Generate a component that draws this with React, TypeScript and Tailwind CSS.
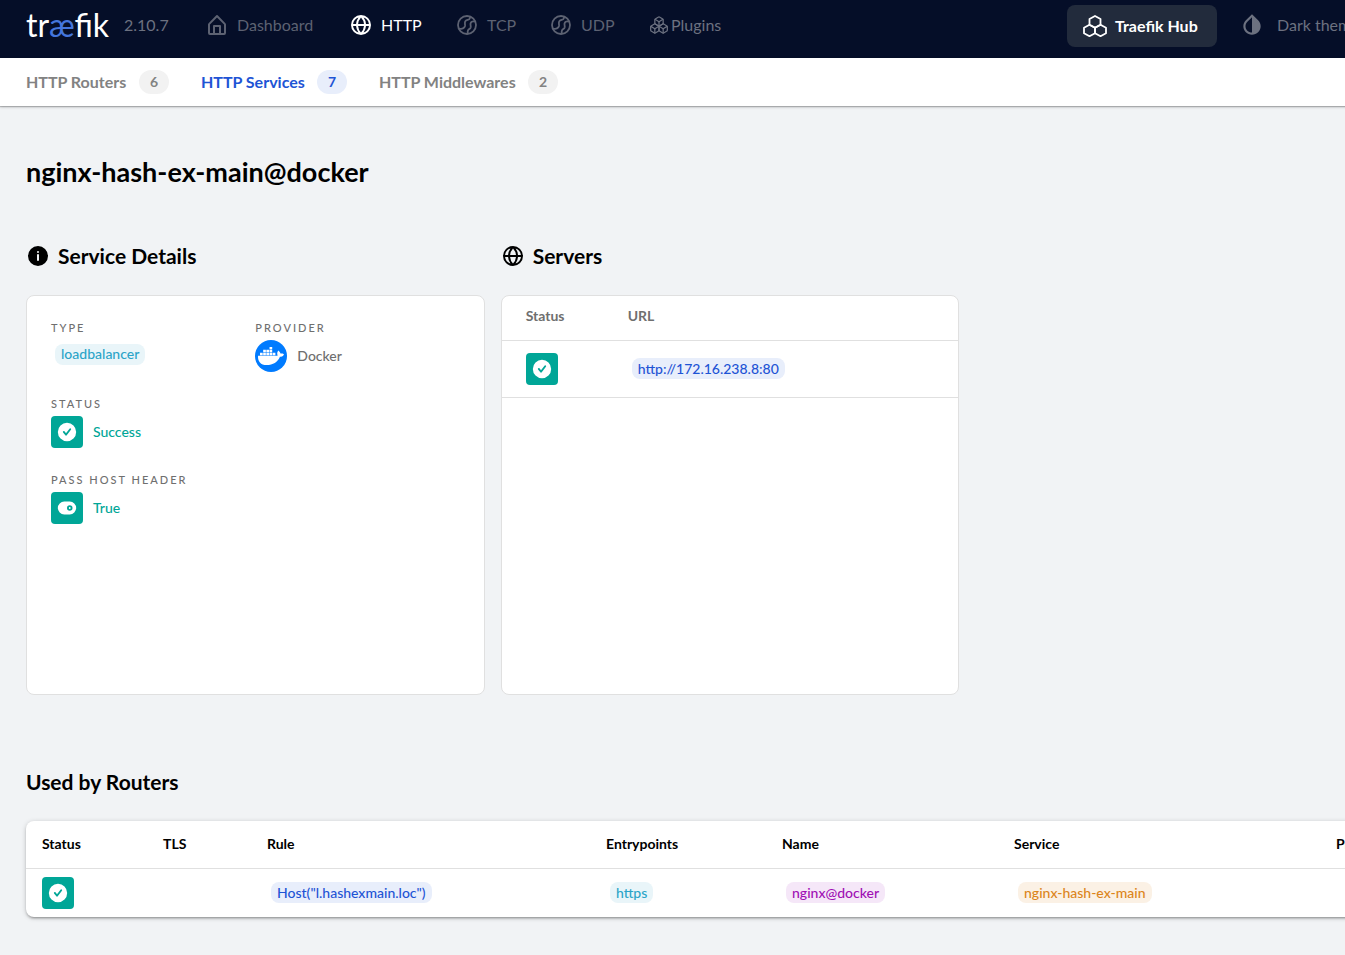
import type { ReactNode } from "react";
import { clsx } from "clsx";
import { FaDocker } from "react-icons/fa";
import { MdInvertColors } from "react-icons/md";
import { LuBoxes } from "react-icons/lu";

const HOME =
  "M20.42 10.18L12.71 2.3a1 1 0 0 0-1.42 0l-7.71 7.89A2 2 0 0 0 3 11.62V20a2 2 0 0 0 1.89 2h14.22A2 2 0 0 0 21 20v-8.38a2.07 2.07 0 0 0-.58-1.44zM10 20v-6h4v6zm9 0h-3v-7a1 1 0 0 0-1-1H9a1 1 0 0 0-1 1v7H5v-8.42l7-7.15 7 7.19z";
const GLOBE =
  "M22 12A10 10 0 0 0 12 2a10 10 0 0 0 0 20 10 10 0 0 0 10-10zm-2.07-1H17a12.91 12.91 0 0 0-2.33-6.54A8 8 0 0 1 19.93 11zM9.08 13H15a11.44 11.44 0 0 1-3 6.61A11 11 0 0 1 9.08 13zm0-2A11.4 11.4 0 0 1 12 4.4a11.19 11.19 0 0 1 3 6.6zm.36-6.57A13.18 13.18 0 0 0 7.07 11h-3a8 8 0 0 1 5.37-6.57zM4.07 13h3a12.86 12.86 0 0 0 2.35 6.56A8 8 0 0 1 4.07 13zm10.55 6.55A13.14 13.14 0 0 0 17 13h2.95a8 8 0 0 1-5.33 6.55z";
const INFO =
  "M12 2a10 10 0 1 0 10 10A10 10 0 0 0 12 2zm1 14a1 1 0 0 1-2 0v-5a1 1 0 0 1 2 0zm-1-7a1 1 0 1 1 1-1 1 1 0 0 1-1 1z";
const CHECK =
  "M12 2a10 10 0 1 0 10 10A10 10 0 0 0 12 2zm4.3 7.61l-4.57 6a1 1 0 0 1-.79.39 1 1 0 0 1-.79-.38l-2.44-3.11a1 1 0 0 1 1.58-1.23l1.63 2.08 3.78-5a1 1 0 1 1 1.6 1.22z";
const TOGGLE =
  "M15 5H9a7 7 0 0 0 0 14h6a7 7 0 0 0 0-14zm0 10a3 3 0 1 1 3-3 3 3 0 0 1-3 3zM15 11a1 1 0 1 0 0 2 1 1 0 0 0 0-2z";

function Icon({ d, className = "size-6" }: { d: string; className?: string }) {
  return (
    <svg viewBox="0 0 24 24" fill="currentColor" className={clsx("shrink-0", className)} aria-hidden="true">
      <path d={d} />
    </svg>
  );
}

function BallIcon() {
  return (
    <svg viewBox="0 0 24 24" fill="none" stroke="currentColor" strokeWidth="1.8" strokeLinecap="round" className="size-6 shrink-0" aria-hidden="true">
      <circle cx="12" cy="12" r="9" />
      <path d="M4 15.500c3 .9 5.500-.2 6-2.500.3-1.600-.6-3 .2-4.600.8-1.600 3-1.300 4.100-2.300.6-.6.8-1.300.8-2.100" />
      <path d="M20.200 8.600c-2.400-.4-4.400.3-4.700 2-.2 1.300.6 2.600.1 4-.5 1.300-2 1.500-2.600 2.800-.4.900-.4 1.900-.3 2.900" />
    </svg>
  );
}

function HubIcon() {
  return (
    <svg viewBox="0 0 24 24" fill="none" stroke="currentColor" strokeWidth="1.8" strokeLinejoin="round" className="size-6 shrink-0" aria-hidden="true">
      <path d="M12 2l5.500 3v5.800L12 13.800l-5.500-3V5z" />
      <path d="M6.500 10.800l5.500 3v5.400l-5.500 3-5.500-3v-5.400z" />
      <path d="M17.500 10.800l5.500 3v5.400l-5.500 3-5.500-3v-5.400z" />
    </svg>
  );
}

function NavItem({ icon, label, width, active }: { icon: ReactNode; label: string; width: string; active?: boolean }) {
  return (
    <a href="#" className={clsx("flex shrink-0 items-center gap-2", width, active ? "text-white" : "text-[#5d6272]")}>
      {icon}
      <span>{label}</span>
    </a>
  );
}

function Tab({ label, count, width, active }: { label: string; count: number; width: string; active?: boolean }) {
  return (
    <a href="#" className={clsx("flex shrink-0 items-center gap-2 font-bold", active ? "text-[#1e54d5]" : "text-[#828282]")}>
      <span className={clsx("whitespace-nowrap", width)}>{label}</span>
      <span className={clsx("flex h-6 w-[30px] items-center justify-center rounded-full text-sm", active ? "bg-[#e8eefb]" : "bg-[#f2f2f2]")}>
        {count}
      </span>
    </a>
  );
}

const TONES = {
  cyan: "bg-[#e9f5f9] text-[#2ba4c8]",
  blue: "bg-[#e8eefb] text-[#1e54d5]",
  purple: "bg-[#f5e7f8] text-[#a010b4]",
  orange: "bg-[#fbf1e5] text-[#dc851b]",
};

function Chip({ tone, children }: { tone: keyof typeof TONES; children: ReactNode }) {
  return (
    <span className={clsx("ml-1 inline-flex h-[21px] items-center rounded-lg px-[6px] text-sm font-medium whitespace-nowrap", TONES[tone])}>
      {children}
    </span>
  );
}

function Tile({ d }: { d: string }) {
  return (
    <span className="flex size-8 shrink-0 items-center justify-center rounded bg-[#00a697] text-white">
      <Icon d={d} className="size-[22px]" />
    </span>
  );
}

function Field({ label, children }: { label: string; children: ReactNode }) {
  return (
    <div>
      <dt className="mb-1 h-4 text-[11px] leading-4 font-medium tracking-[2px] whitespace-nowrap text-[#6f6f6f] uppercase">{label}</dt>
      <dd className="flex h-8 items-center gap-[10px] text-sm font-medium">{children}</dd>
    </div>
  );
}

export default function App() {
  return (
    <div className="min-h-screen overflow-x-hidden bg-[#f1f3f5] font-['Lato','Open_Sans',sans-serif] text-base text-black">
      <div className="min-w-[1460px]">
        <header className="flex h-[58px] bg-[#050e28] pb-2 pl-[26px]">
          <a href="#" className="flex w-[98px] shrink-0 items-center text-[32px] leading-none text-white">
            <span>
              tr<span className="text-[#4476dd]">æ</span>fik
            </span>
          </a>
          <span className="flex w-[81px] shrink-0 items-center text-[#6c7180]">2.10.7</span>
          <nav className="flex grow items-center gap-8">
            <NavItem icon={<Icon d={HOME} />} label="Dashboard" width="min-w-[112px]" />
            <NavItem icon={<Icon d={GLOBE} />} label="HTTP" width="min-w-[74px]" active />
            <NavItem icon={<BallIcon />} label="TCP" width="min-w-[62px]" />
            <NavItem icon={<BallIcon />} label="UDP" width="min-w-[68px]" />
            <a href="#" className="flex shrink-0 items-center gap-[2px] text-[#6c7180]">
              <LuBoxes className="size-5" strokeWidth={1.5} />
              Plugins
            </a>
          </nav>
          <div className="flex w-[393px] shrink-0 items-center gap-[22px]">
            <button type="button" className="mt-[2px] flex h-[42px] w-[150px] items-center gap-2 rounded-lg bg-[#222b3c] px-4 font-bold text-white">
              <HubIcon />
              Traefik Hub
            </button>
            <button type="button" className="flex items-center gap-3 whitespace-nowrap text-[#6c7180]">
              <MdInvertColors className="size-[26px]" />
              Dark theme
            </button>
          </div>
        </header>

        <nav className="relative flex h-12 items-center gap-8 bg-white pl-[26px] shadow-[0_1px_3px_rgba(0,0,0,0.2),0_1px_1px_rgba(0,0,0,0.2)]">
          <Tab label="HTTP Routers" count={6} width="min-w-[105px]" />
          <Tab label="HTTP Services" count={7} width="min-w-[108px]" active />
          <Tab label="HTTP Middlewares" count={2} width="min-w-[141px]" />
        </nav>

        <main className="px-[26px] pt-12 pb-9">
          <h1 className="text-[27px] leading-9 font-bold">nginx-hash-ex-main@docker</h1>

          <div className="mt-[50px] grid grid-cols-3 gap-4">
            <section>
              <h2 className="mb-6 flex h-[31px] items-center gap-2 text-[21px] font-bold">
                <Icon d={INFO} />
                Service Details
              </h2>
              <dl className="grid h-[400px] grid-cols-2 content-start gap-y-6 rounded-lg border border-[#e0e0e0] bg-white p-6">
                <Field label="Type">
                  <span className="pb-1 leading-none">
                    <Chip tone="cyan">loadbalancer</Chip>
                  </span>
                </Field>
                <Field label="Provider">
                  <span className="flex size-8 items-center justify-center rounded-full bg-[#007bff] text-white">
                    <FaDocker className="size-[26px]" />
                  </span>
                  <span className="text-[#6f6f6f]">Docker</span>
                </Field>
                <div className="col-span-2">
                  <Field label="Status">
                    <Tile d={CHECK} />
                    <span className="text-[#00a697]">Success</span>
                  </Field>
                </div>
                <div className="col-span-2">
                  <Field label="Pass Host Header">
                    <Tile d={TOGGLE} />
                    <span className="text-[#00a697]">True</span>
                  </Field>
                </div>
              </dl>
            </section>

            <section>
              <h2 className="mb-6 flex h-[31px] items-center gap-2 text-[21px] font-bold">
                <Icon d={GLOBE} />
                Servers
              </h2>
              <div className="h-[400px] rounded-lg border border-[#e0e0e0] bg-white">
                <table className="w-full table-fixed border-collapse text-left text-sm">
                  <colgroup>
                    <col className="w-[126px]" />
                    <col />
                  </colgroup>
                  <thead>
                    <tr className="h-11 border-b border-[#e0e0e0] text-[#6f6f6f]">
                      <th scope="col" className="pb-1 pl-6 font-bold">Status</th>
                      <th scope="col" className="pb-1 font-bold">URL</th>
                    </tr>
                  </thead>
                  <tbody>
                    <tr className="h-[57px] border-b border-[#e0e0e0]">
                      <td className="pl-6"><Tile d={CHECK} /></td>
                      <td><Chip tone="blue">http://172.16.238.8:80</Chip></td>
                    </tr>
                  </tbody>
                </table>
              </div>
            </section>
          </div>

          <section className="mt-[72px]">
            <h2 className="mb-6 text-[21px] leading-[30px] font-bold">Used by Routers</h2>
            <div className="rounded-lg bg-white shadow-[0_1px_5px_rgba(0,0,0,0.2),0_2px_2px_rgba(0,0,0,0.14),0_3px_1px_-2px_rgba(0,0,0,0.12)]">
              <table className="w-full table-fixed border-collapse text-left text-sm [&_td]:pl-4 [&_th]:pl-4">
                <colgroup>
                  <col className="w-[121px]" />
                  <col className="w-[104px]" />
                  <col className="w-[339px]" />
                  <col className="w-[176px]" />
                  <col className="w-[232px]" />
                  <col className="w-[322px]" />
                  <col />
                </colgroup>
                <thead>
                  <tr className="h-[47px] border-b border-[#e0e0e0]">
                    <th scope="col">Status</th>
                    <th scope="col">TLS</th>
                    <th scope="col">Rule</th>
                    <th scope="col">Entrypoints</th>
                    <th scope="col">Name</th>
                    <th scope="col">Service</th>
                    <th scope="col">Provider</th>
                  </tr>
                </thead>
                <tbody>
                  <tr className="h-[49px]">
                    <td><Tile d={CHECK} /></td>
                    <td />
                    <td><Chip tone="blue">Host("l.hashexmain.loc")</Chip></td>
                    <td><Chip tone="cyan">https</Chip></td>
                    <td><Chip tone="purple">nginx@docker</Chip></td>
                    <td><Chip tone="orange">nginx-hash-ex-main</Chip></td>
                    <td />
                  </tr>
                </tbody>
              </table>
            </div>
          </section>
        </main>
      </div>
    </div>
  );
}
